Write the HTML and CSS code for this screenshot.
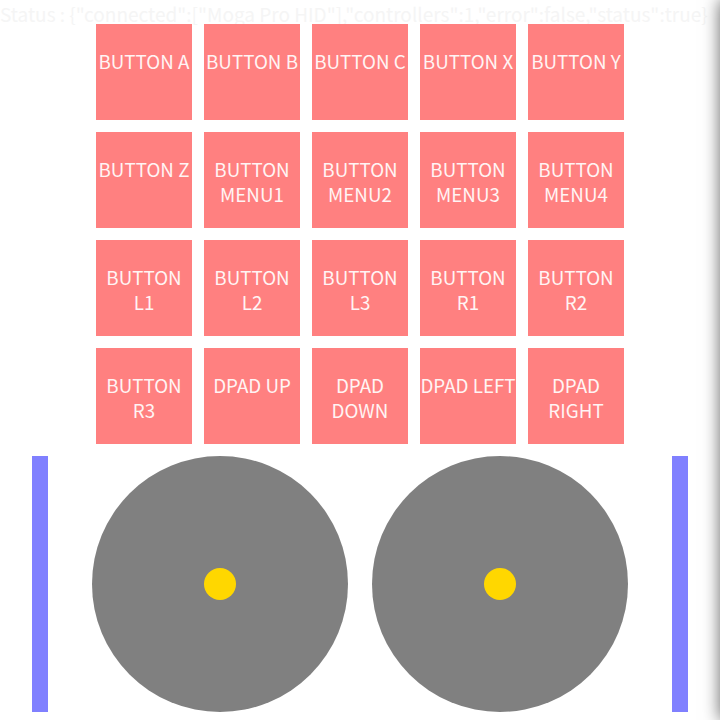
FILE: index.html
```html
<!DOCTYPE html>
<html>
<head>
<meta charset="utf-8">
<link rel="stylesheet" href="styles.css">
</head>
<body>
<div class="status">Status : {"connected":["Moga Pro HID"],"controllers":1,"error":false,"status":true}</div>
<main class="pad">
  <div class="grid">
    <div class="btn">BUTTON A</div>
    <div class="btn">BUTTON B</div>
    <div class="btn">BUTTON C</div>
    <div class="btn">BUTTON X</div>
    <div class="btn">BUTTON Y</div>
    <div class="btn">BUTTON Z</div>
    <div class="btn">BUTTON MENU1</div>
    <div class="btn">BUTTON MENU2</div>
    <div class="btn">BUTTON MENU3</div>
    <div class="btn">BUTTON MENU4</div>
    <div class="btn">BUTTON L1</div>
    <div class="btn">BUTTON L2</div>
    <div class="btn">BUTTON L3</div>
    <div class="btn">BUTTON R1</div>
    <div class="btn">BUTTON R2</div>
    <div class="btn">BUTTON R3</div>
    <div class="btn">DPAD UP</div>
    <div class="btn">DPAD DOWN</div>
    <div class="btn">DPAD LEFT</div>
    <div class="btn">DPAD RIGHT</div>
  </div>
  <div class="sticks">
    <div class="trigger"></div>
    <div class="stick"><div class="knob"></div></div>
    <div class="stick"><div class="knob"></div></div>
    <div class="trigger"></div>
  </div>
</main>
<div class="drawer"></div>
</body>
</html>
```
FILE: styles.css
```css
html, body {
  margin: 0;
  padding: 0;
  background: #ffffff;
  width: 720px;
  height: 720px;
  overflow: hidden;
  font-family: "Noto Sans CJK JP", "Noto Sans", sans-serif;
}
.status {
  position: absolute;
  left: 0;
  top: 0;
  font-size: 19px;
  line-height: 28px;
  color: #f5f5f5;
  white-space: nowrap;
  z-index: 0;
}
.pad {
  position: relative;
  z-index: 1;
  padding-top: 24px;
  display: flex;
  flex-direction: column;
  align-items: center;
  gap: 12px;
}
.grid {
  display: grid;
  grid-template-columns: repeat(5, 96px);
  grid-auto-rows: 96px;
  gap: 12px;
}
.btn {
  background: #ff8080;
  color: #fff4f4;
  font-size: 18.8px;
  line-height: 25px;
  text-align: center;
  padding-top: 24px;
  box-sizing: border-box;
}
.sticks {
  display: flex;
  align-items: center;
  gap: 24px;
  width: 656px;
}
.trigger {
  width: 16px;
  height: 256px;
  background: #8080ff;
}
.trigger:first-child { margin-right: 20px; }
.trigger:last-child { margin-left: 20px; }
.stick {
  width: 256px;
  height: 256px;
  border-radius: 50%;
  background: #808080;
  display: flex;
  align-items: center;
  justify-content: center;
}
.knob {
  width: 32px;
  height: 32px;
  border-radius: 50%;
  background: #ffd700;
}
.drawer {
  position: absolute;
  top: 0;
  left: 720px;
  width: 300px;
  height: 720px;
  background: #fff;
  box-shadow: 0 0 16px rgba(0,0,0,0.6);
}
```
